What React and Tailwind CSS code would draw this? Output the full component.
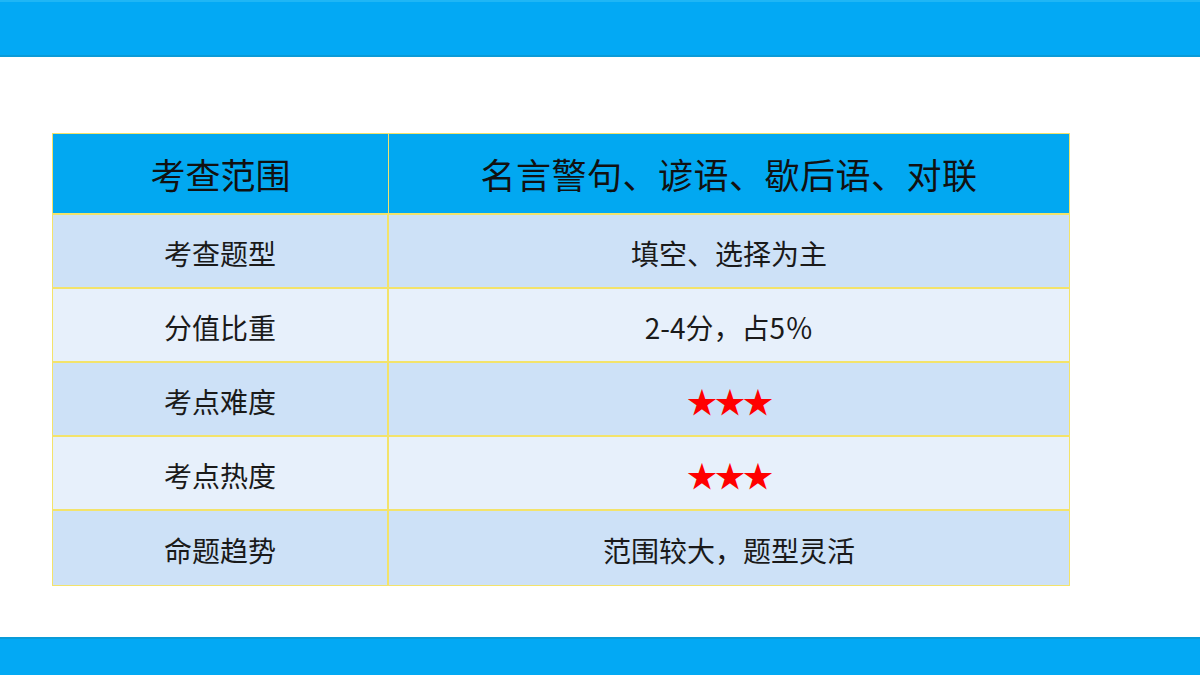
const rows = [
  { label: '考查题型', value: '填空、选择为主' },
  { label: '分值比重', value: '2-4分，占5％' },
  { label: '考点难度', value: '★★★', stars: true },
  { label: '考点热度', value: '★★★', stars: true },
  { label: '命题趋势', value: '范围较大，题型灵活' },
]

const font = { fontFamily: '"Noto Sans CJK SC", "Liberation Serif", serif' }

export default function App() {
  return (
    <div className="w-[1200px] h-[675px] bg-white flex flex-col overflow-hidden" style={font}>
      <div className="h-[57px] bg-[#03a9f4] border-t-2 border-t-[#1fb6f5] border-b-2 border-b-[#0a9bd8]" />

      <div className="flex-1 pl-[52px] pt-[76px]">
        <div className="w-[1018px] border border-[#f3e36b]">
          <div className="flex h-[81px] bg-[#02a8f1] text-[#111] text-[35px] border-b-2 border-[#f3e36b]">
            <div className="w-[336px] flex items-center justify-center pt-[2px] border-r border-[#f3e36b]">考查范围</div>
            <div className="flex-1 flex items-center justify-center pt-[2px] tracking-[0.5px]">名言警句、谚语、歇后语、对联</div>
          </div>
          {rows.map((r, i) => (
            <div key={r.label}
              className={`flex h-[74px] text-[28px] text-[#1a1a1a] ${i % 2 === 0 ? 'bg-[#cde1f7]' : 'bg-[#e7f0fb]'} ${i < rows.length - 1 ? 'border-b-2 border-[#f3e36b]' : ''}`}>
              <div className="w-[336px] flex items-center justify-center pt-[3px] border-r-2 border-[#f3e36b]">{r.label}</div>
              <div className={`flex-1 flex items-center justify-center pt-[3px] ${r.stars ? 'text-[#ff0000] text-[30px] tracking-[-2px]' : ''}`}>
                {r.value}
              </div>
            </div>
          ))}
        </div>
      </div>

      <div className="h-[38px] bg-[#03a9f4] border-t-2 border-t-[#0a9bd8]" />
    </div>
  )
}
